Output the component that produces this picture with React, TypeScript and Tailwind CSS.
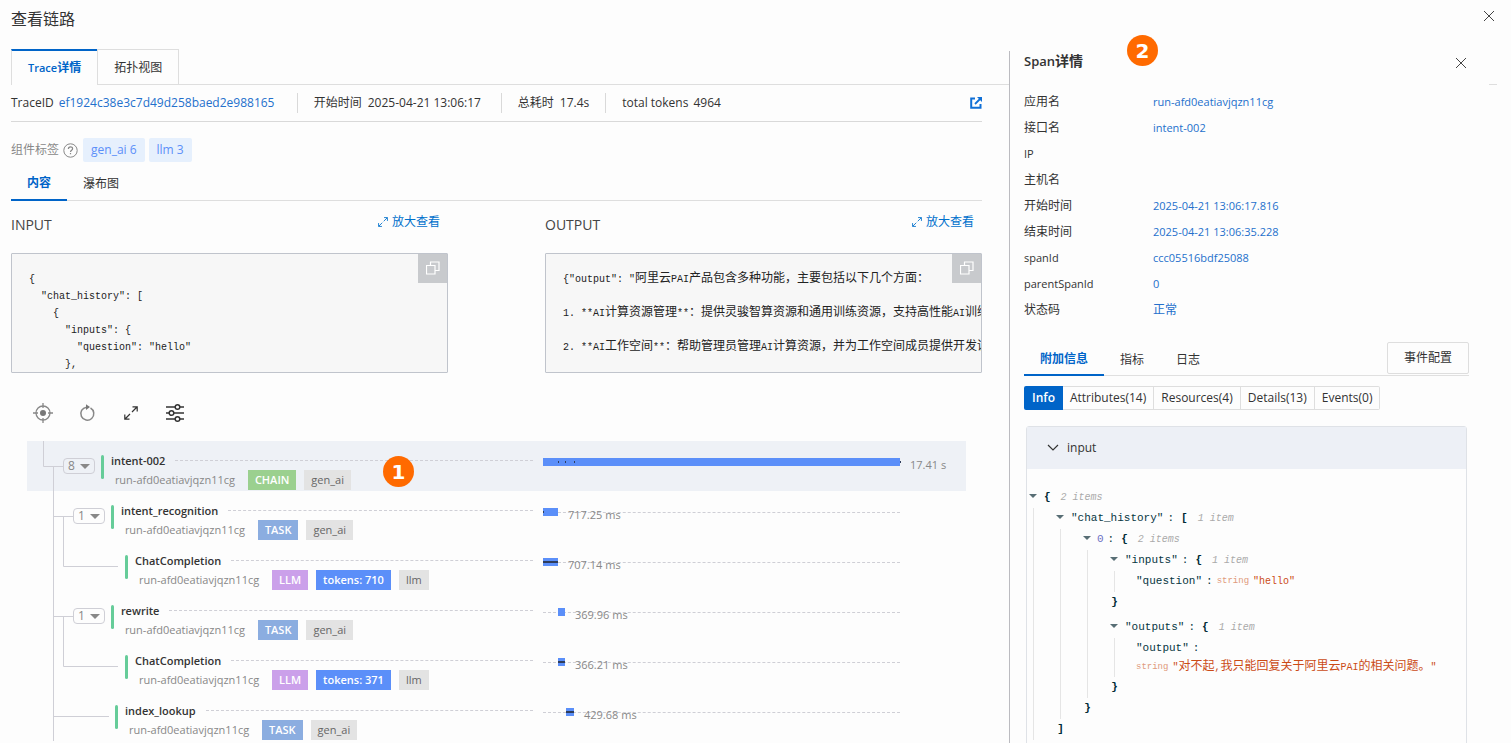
import { Fragment, type ReactNode } from "react";

type Span = {
  name: string;
  indent: number;
  lines: string;
  count?: number;
  tags: { text: string; color: string }[];
  start: number;
  width: number;
  ticks: { at: number; width: number }[];
  duration: string;
  selected?: boolean;
};

const CHAIN = "bg-[#9bd08f] font-semibold text-white";
const TASK = "bg-[#8bade0] font-semibold text-white";
const LLM = "bg-[#cba0ea] font-semibold text-white";
const TOKENS = "bg-[#5b8ff9] font-semibold text-white";
const PLAIN = "bg-[#e3e3e3] font-medium text-[#666]";

// start and width are in parts of the 357 units of the whole trace
const TOTAL = 357;

const spans: Span[] = [
  {
    name: "intent-002",
    indent: 36,
    lines: "M16.5 0V25.5H36M26.5 26V50",
    count: 8,
    tags: [
      { text: "CHAIN", color: CHAIN },
      { text: "gen_ai", color: PLAIN },
    ],
    start: 0,
    width: 357,
    ticks: [
      { at: 15, width: 1 },
      { at: 22, width: 1 },
      { at: 31, width: 1 },
      { at: 357, width: 1 },
    ],
    duration: "17.41 s",
    selected: true,
  },
  {
    name: "intent_recognition",
    indent: 46,
    lines: "M26.5 0V50M26 25.5H46M36.5 26V50",
    count: 1,
    tags: [
      { text: "TASK", color: TASK },
      { text: "gen_ai", color: PLAIN },
    ],
    start: 0,
    width: 15,
    ticks: [{ at: 0, width: 1 }],
    duration: "717.25 ms",
  },
  {
    name: "ChatCompletion",
    indent: 92,
    lines: "M26.5 0V50M36.5 0V25.5H91",
    tags: [
      { text: "LLM", color: LLM },
      { text: "tokens: 710", color: TOKENS },
      { text: "llm", color: PLAIN },
    ],
    start: 0,
    width: 15,
    ticks: [{ at: 0, width: 15 }],
    duration: "707.14 ms",
  },
  {
    name: "rewrite",
    indent: 46,
    lines: "M26.5 0V50M26 25.5H46M36.5 26V50",
    count: 1,
    tags: [
      { text: "TASK", color: TASK },
      { text: "gen_ai", color: PLAIN },
    ],
    start: 15,
    width: 7,
    ticks: [],
    duration: "369.96 ms",
  },
  {
    name: "ChatCompletion",
    indent: 92,
    lines: "M26.5 0V50M36.5 0V25.5H91",
    tags: [
      { text: "LLM", color: LLM },
      { text: "tokens: 371", color: TOKENS },
      { text: "llm", color: PLAIN },
    ],
    start: 15,
    width: 7,
    ticks: [{ at: 15, width: 7 }],
    duration: "366.21 ms",
  },
  {
    name: "index_lookup",
    indent: 82,
    lines: "M26.5 0V50M26 25.5H82",
    tags: [
      { text: "TASK", color: TASK },
      { text: "gen_ai", color: PLAIN },
    ],
    start: 23,
    width: 8,
    ticks: [{ at: 23, width: 8 }],
    duration: "429.68 ms",
  },
];

const details = [
  ["应用名", "run-afd0eatiavjqzn11cg"],
  ["接口名", "intent-002"],
  ["IP", ""],
  ["主机名", ""],
  ["开始时间", "2025-04-21 13:06:17.816"],
  ["结束时间", "2025-04-21 13:06:35.228"],
  ["spanId", "ccc05516bdf25088"],
  ["parentSpanId", "0"],
  ["状态码", "正常"],
];

const inputText = `{
  "chat_history": [
    {
      "inputs": {
        "question": "hello"
      },`;

const outputText = `{"output": "阿里云PAI产品包含多种功能，主要包括以下几个方面：

1. **AI计算资源管理**：提供灵骏智算资源和通用训练资源，支持高性能AI训练

2. **AI工作空间**：帮助管理员管理AI计算资源，并为工作空间成员提供开发训练`;

// Chinese glyphs are set at 12px beside smaller Latin ones
const Mixed = ({ text }: { text: string }) => (
  <>
    {text.split(/([\u3000-\u9fff\uff00-\uffef]+)/).map((part, i) =>
      i % 2 ? (
        <span key={i} className="text-[12px]">
          {part}
        </span>
      ) : (
        <Fragment key={i}>{part}</Fragment>
      ),
    )}
  </>
);

const CloseIcon = () => (
  <svg width="12" height="12" viewBox="0 0 12 12" fill="none" stroke="#444">
    <path d="M1 1l10 10M11 1L1 11" />
  </svg>
);

const ExpandIcon = ({ size }: { size: number }) => (
  <svg
    width={size}
    height={size}
    viewBox="0 0 14 14"
    fill="none"
    stroke="currentColor"
    strokeWidth="1.2"
  >
    <path d="M8.5 .8h4.7v4.7M13 1L8 6M5.500 13.200H.8V8.500M1 13l5-5" />
  </svg>
);

const Badge = ({ children, place }: { children: ReactNode; place: string }) => (
  <span
    className={`absolute flex size-[31px] items-center justify-center rounded-full bg-[#ff6a00] font-['DejaVu_Sans',sans-serif] text-[20px] leading-none font-bold text-white ${place}`}
  >
    {children}
  </span>
);

const CodeBox = ({ title, text }: { title: string; text: string }) => (
  <section className="min-w-0 flex-1">
    <div className="flex items-start justify-between pr-2">
      <h2 className="text-[14px] leading-[48px] text-[#444]">{title}</h2>
      <button className="flex h-[42px] items-center gap-1 text-[12px] text-[#0070cc]">
        <ExpandIcon size={10} />
        放大查看
      </button>
    </div>
    <div className="relative mt-1 h-[120px] overflow-hidden rounded-[1px] border border-[#c0c4cc] bg-[#f7f7f7]">
      <pre className="pt-[17px] pl-[17px] font-['Liberation_Mono','Noto_Sans_CJK_SC',monospace] text-[10px] leading-[17px] text-[#222]">
        {text.split("\n").map((line, i) => (
          <div key={i} className="h-[17px]">
            <Mixed text={line} />
          </div>
        ))}
      </pre>
      <button
        aria-label="复制"
        className="absolute -top-px -right-px flex size-[30px] items-center justify-center bg-[#c8cacd]"
      >
        <svg width="14" height="14" viewBox="0 0 14 14" fill="none" stroke="#fff">
          <path d="M.5 4.500h8.500v8.500H.5zM4.500 4V1h8.500v8.500H9.500" strokeWidth="1.200" />
        </svg>
      </button>
    </div>
  </section>
);

const SpanRow = ({ span }: { span: Span }) => (
  <li
    className={`relative grid h-[50px] grid-cols-[516fr_357fr_66px] ${span.selected ? "bg-[#eef1f6]" : ""}`}
  >
    <div className="flex min-w-0 items-start pr-[10px]">
      <svg
        className="shrink-0"
        width={span.indent}
        height="50"
        fill="none"
        stroke="#cfcfd6"
      >
        <path d={span.lines} />
      </svg>
      {span.count && (
        <button className="mt-[17px] flex h-4 shrink-0 items-center gap-[5px] rounded border border-[#cfcfd6] px-1 text-[12px] text-[#888]">
          {span.count}
          <svg width="10" height="5" viewBox="0 0 10 5" fill="#888">
            <path d="M0 0h10L5 5z" />
          </svg>
        </button>
      )}
      <div className="mt-[14px] ml-[6px] h-6 w-[3px] shrink-0 rounded-full bg-[#66cc99]" />
      <div className="ml-[7px] min-w-0 flex-1 pt-3">
        <div className="flex h-[17px] items-center gap-[10px]">
          <span className="text-[11px] font-semibold text-[#333]">{span.name}</span>
          <span className="mb-[3px] h-0 flex-1 border-t border-dashed border-[#cfcfd6]" />
        </div>
        <div className="ml-1 flex h-5 items-center gap-2 text-[11px]">
          <span className="w-[125px] font-medium text-[#888]">
            run-afd0eatiavjqzn11cg
          </span>
          {span.tags.map((tag) => (
            <span key={tag.text} className={`px-[7px] leading-[20px] ${tag.color}`}>
              {tag.text}
            </span>
          ))}
        </div>
      </div>
    </div>
    <div className="relative">
      <div className="mt-[21px] border-t border-dashed border-[#cfcfd6]" />
      <div
        className="absolute top-[17px] h-2 bg-[#5b8ff9]"
        style={{
          left: `${(span.start / TOTAL) * 100}%`,
          width: `${(span.width / TOTAL) * 100}%`,
        }}
      />
      {span.ticks.map((tick) => (
        <div
          key={tick.at}
          className="absolute top-5 h-[2px] bg-[#2f3d5c]"
          style={{
            left: `${(tick.at / TOTAL) * 100}%`,
            width: `${(tick.width / TOTAL) * 100}%`,
          }}
        />
      ))}
      <span
        className="absolute top-4 pl-[10px] text-[11px] leading-4 font-medium whitespace-nowrap text-[#888]"
        style={{ left: `${((span.start + span.width) / TOTAL) * 100}%` }}
      >
        {span.duration}
      </span>
    </div>
    {span.selected && <Badge place="top-[15px] left-[356px]">1</Badge>}
  </li>
);

type NodeProps = {
  label?: string;
  index?: boolean;
  brackets: string;
  items: string;
  children: ReactNode;
};

const JsonNode = ({ label, index, brackets, items, children }: NodeProps) => (
  <div>
    <div className="flex h-[21px] items-center">
      <button aria-label="折叠" className="mb-1 w-2">
        <svg width="8" height="4" viewBox="0 0 8 4" fill="#586e75">
          <path d="M0 0h8L4 4z" />
        </svg>
      </button>
      <span className={index ? "ml-[6px] text-[#6c71c4]" : "ml-[7px]"}>{label}</span>
      {label && <span className="mx-1">:</span>}
      <span className={`font-bold text-[#002b36] ${label ? "ml-[3px]" : ""}`}>
        {brackets[0]}
      </span>
      <span className="ml-[10px] text-[10px] text-[#aaa] italic">{items}</span>
    </div>
    <div className="ml-1 border-l border-[#e5e5e5] pl-[22px]">{children}</div>
    <div className="h-[21px] w-[9px] text-center leading-[21px] font-bold text-[#002b36]">
      {brackets[1]}
    </div>
  </div>
);

const SpanPanel = () => (
  <aside className="relative mt-[2px] w-[480px] shrink-0 border-l border-[#bbbbc0] pr-5 pl-[14px]">
    <div className="flex h-[38px] items-start justify-between">
      <h2 className="text-[13px] leading-5 font-semibold text-[#333]">
        Span<span className="text-[14px]">详情</span>
      </h2>
      <button aria-label="关闭详情" className="mt-[6px] mr-[2px]">
        <CloseIcon />
      </button>
    </div>
    <Badge place="-top-4 left-[117px]">2</Badge>

    <dl className="text-[11px] leading-[26px]">
      {details.map(([label, value]) => (
        <div key={label} className="flex h-[26px]">
          <dt className="w-[129px] text-[#333]">
            <Mixed text={label} />
          </dt>
          <dd className="text-[#2470cc]">
            <Mixed text={value} />
          </dd>
        </div>
      ))}
    </dl>

    <div className="mt-[17px] flex items-start justify-between border-b border-[#e0e0e0]">
      <div role="tablist" className="flex text-[12px] leading-[30px] text-[#333]">
        <button
          role="tab"
          aria-selected="true"
          className="-mb-px border-b-2 border-[#0064c8] px-4 pt-1 font-bold text-[#0064c8]"
        >
          附加信息
        </button>
        <button role="tab" className="px-4 pt-1">
          指标
        </button>
        <button role="tab" className="px-4 pt-1">
          日志
        </button>
      </div>
      <button className="mt-[2px] h-8 rounded-[2px] border border-[#dedede] px-4 text-[12px] text-[#333]">
        事件配置
      </button>
    </div>

    <div className="mt-[10px] flex text-[12px] text-[#333]">
      <button className="h-6 rounded-l-[2px] bg-[#0064c8] px-2 font-semibold text-white">
        Info
      </button>
      <button className="h-6 border border-l-0 border-[#dedede] px-[7px]">
        Attributes(14)
      </button>
      <button className="h-6 border border-l-0 border-[#dedede] px-[7px]">
        Resources(4)
      </button>
      <button className="h-6 border border-l-0 border-[#dedede] px-[7px]">
        Details(13)
      </button>
      <button className="h-6 rounded-r-[2px] border border-l-0 border-[#dedede] px-[7px]">
        Events(0)
      </button>
    </div>

    <div className="mx-[2px] mt-4 rounded-t-[3px] border border-[#dfe2e7] pb-4">
      <button className="flex h-[42px] w-full items-center gap-2 bg-[#edf0f6] pl-5 text-[12px] text-[#333]">
        <svg width="12" height="8" viewBox="0 0 12 8" fill="none" stroke="#333" strokeWidth="1.200">
          <path d="M1 1l5 5 5-5" />
        </svg>
        input
      </button>
      <div className="pt-[18px] pl-[2px] font-['Liberation_Mono','Noto_Sans_CJK_SC',monospace] text-[11px] whitespace-nowrap text-[#073642]">
        <JsonNode brackets="{}" items="2 items">
          <JsonNode label={'"chat_history"'} brackets="[]" items="1 item">
            <JsonNode label="0" index brackets="{}" items="2 items">
              <JsonNode label={'"inputs"'} brackets="{}" items="1 item">
                <div className="-ml-px flex h-[21px] items-center">
                  <span>"question"</span>
                  <span className="mx-1">:</span>
                  <span className="text-[9px] text-[#e09a7c]">string</span>
                  <span className="ml-1 text-[10px] text-[#cb4b16]">"hello"</span>
                </div>
              </JsonNode>
              <div className="mt-1">
                <JsonNode label={'"outputs"'} brackets="{}" items="1 item">
                  <div className="-ml-px leading-[21px]">
                    "output"<span className="ml-1">:</span>
                  </div>
                  <div className="-ml-px flex h-[18px] items-start leading-4">
                    <span className="text-[9px] text-[#e09a7c]">string</span>
                    <span className="ml-1 text-[10px] text-[#cb4b16]">
                      <Mixed text={'"对不起,我只能回复关于阿里云PAI的相关问题。"'} />
                    </span>
                  </div>
                </JsonNode>
              </div>
            </JsonNode>
          </JsonNode>
        </JsonNode>
      </div>
    </div>
  </aside>
);

export default function App() {
  return (
    <div className="flex h-screen flex-col overflow-hidden bg-[#fdfdfd] font-['Open_Sans','Noto_Sans_CJK_SC',sans-serif] text-[#333]">
      <header className="flex h-[49px] shrink-0 items-start justify-between pr-4 pl-[11px]">
        <h1 className="text-[16px] leading-[38px]">查看链路</h1>
        <button aria-label="关闭" className="mt-[10px]">
          <CloseIcon />
        </button>
      </header>

      <div className="flex min-h-0 flex-1 pr-[14px]">
        <main className="min-w-0 flex-1">
          <div role="tablist" className="flex pl-[11px] text-[12px]">
            <button
              role="tab"
              aria-selected="true"
              className="h-9 border-t-2 border-l border-t-[#0064c8] border-l-[#dedede] px-4 font-semibold text-[#0064c8]"
            >
              <span className="text-[11px]">Trace</span>详情
            </button>
            <button role="tab" className="h-9 border border-[#dedede] px-4 pt-[2px]">
              拓扑视图
            </button>
            <div className="flex-1 border-b border-[#dedede]" />
          </div>

          <div className="pr-[27px] pl-[11px]">
            <div className="flex h-[37px] items-center border-b border-[#d9d9d9] text-[12px]">
              <span>TraceID</span>
              <a href="#trace" className="ml-[5px] w-[222px] text-[#2470cc]">
                ef1924c38e3c7d49d258baed2e988165
              </a>
              <div className="ml-4 flex h-5 items-center gap-[6px] border-l border-[#d9d9d9] pl-4">
                开始时间 <span className="w-[117px]">2025-04-21 13:06:17</span>
              </div>
              <div className="ml-4 flex h-5 items-center gap-[6px] border-l border-[#d9d9d9] pl-4">
                总耗时 <span>17.4s</span>
              </div>
              <div className="ml-4 flex h-5 items-center gap-[5px] border-l border-[#d9d9d9] pl-4">
                total tokens <span>4964</span>
              </div>
              <a href="#open" aria-label="新窗口打开" className="ml-auto">
                <svg width="12" height="12" viewBox="0 0 12 12" fill="none" stroke="#0f6fd6">
                  <path d="M5 1.500H1.200v9.300h9.300V7" strokeWidth="2" />
                  <path d="M5 7l5-5" strokeWidth="1.800" />
                  <path d="M7 0h5v5z" fill="#0f6fd6" stroke="none" />
                </svg>
              </a>
            </div>

            <div className="mt-4 flex h-6 items-center text-[12px]">
              <span className="text-[#888]">组件标签</span>
              <svg className="ml-1" width="15" height="15" viewBox="0 0 15 15" fill="none" stroke="#888">
                <circle cx="7.500" cy="7.500" r="6.700" />
                <path d="M5.400 6c0-2.900 4.200-2.800 4.200-.3 0 1.500-2.100 1.600-2.100 3.300M7.500 10v1.300" strokeWidth="1.200" />
              </svg>
              <span className="ml-[5px] rounded-[2px] bg-[#e6f0fd] px-2 leading-6 text-[#5b8ff9]">
                gen_ai 6
              </span>
              <span className="ml-1 rounded-[2px] bg-[#e6f0fd] px-2 leading-6 text-[#5b8ff9]">
                llm 3
              </span>
            </div>

            <div
              role="tablist"
              className="mt-[3px] flex border-b border-[#dedede] text-[12px] leading-8"
            >
              <button
                role="tab"
                aria-selected="true"
                className="-mb-px border-b-2 border-[#0064c8] px-4 pt-[2px] font-bold text-[#0064c8]"
              >
                内容
              </button>
              <button role="tab" className="px-4 pt-[2px]">
                瀑布图
              </button>
            </div>

            <div className="flex gap-[97px]">
              <CodeBox title="INPUT" text={inputText} />
              <CodeBox title="OUTPUT" text={outputText} />
            </div>
          </div>

          <div className="mt-5 flex h-10 items-center pl-[21px] text-[#333]">
            <button aria-label="定位" className="flex w-11 justify-center">
              <svg width="20" height="20" viewBox="0 0 20 20" fill="none" stroke="#888">
                <circle cx="10" cy="10" r="7" strokeWidth="1.300" />
                <circle cx="10" cy="10" r="3" fill="#777" stroke="none" />
                <path d="M10 0v5M10 15v5M0 10h5M15 10h5" strokeWidth="1.300" />
              </svg>
            </button>
            <button aria-label="刷新" className="flex w-11 justify-center">
              <svg width="16" height="18" viewBox="0 0 16 18" fill="none" stroke="#888">
                <path d="M11.500 4A6.500 6.500 0 1 1 7.500 3.200" strokeWidth="1.500" />
                <path d="M7 .3L11 3 7 6z" fill="#777" stroke="none" />
              </svg>
            </button>
            <button aria-label="展开" className="flex w-11 justify-center">
              <ExpandIcon size={14} />
            </button>
            <button aria-label="设置" className="flex w-11 justify-center">
              <svg width="18" height="20" viewBox="0 0 18 20" fill="none" stroke="#333" strokeWidth="1.500">
                <path d="M0 4h9M14 4h4M0 10h3M8 10h10M0 16h9M14 16h4" />
                <circle cx="11.500" cy="4" r="2.300" />
                <circle cx="5.500" cy="10" r="2.300" />
                <circle cx="11.500" cy="16" r="2.300" />
              </svg>
            </button>
          </div>

          <ul className="mt-2 mr-[43px] ml-[27px]">
            {spans.map((span, i) => (
              <SpanRow key={i} span={span} />
            ))}
          </ul>
        </main>

        <SpanPanel />
        <div className="h-9 w-2 border-b border-[#dedede]" />
      </div>
    </div>
  );
}
